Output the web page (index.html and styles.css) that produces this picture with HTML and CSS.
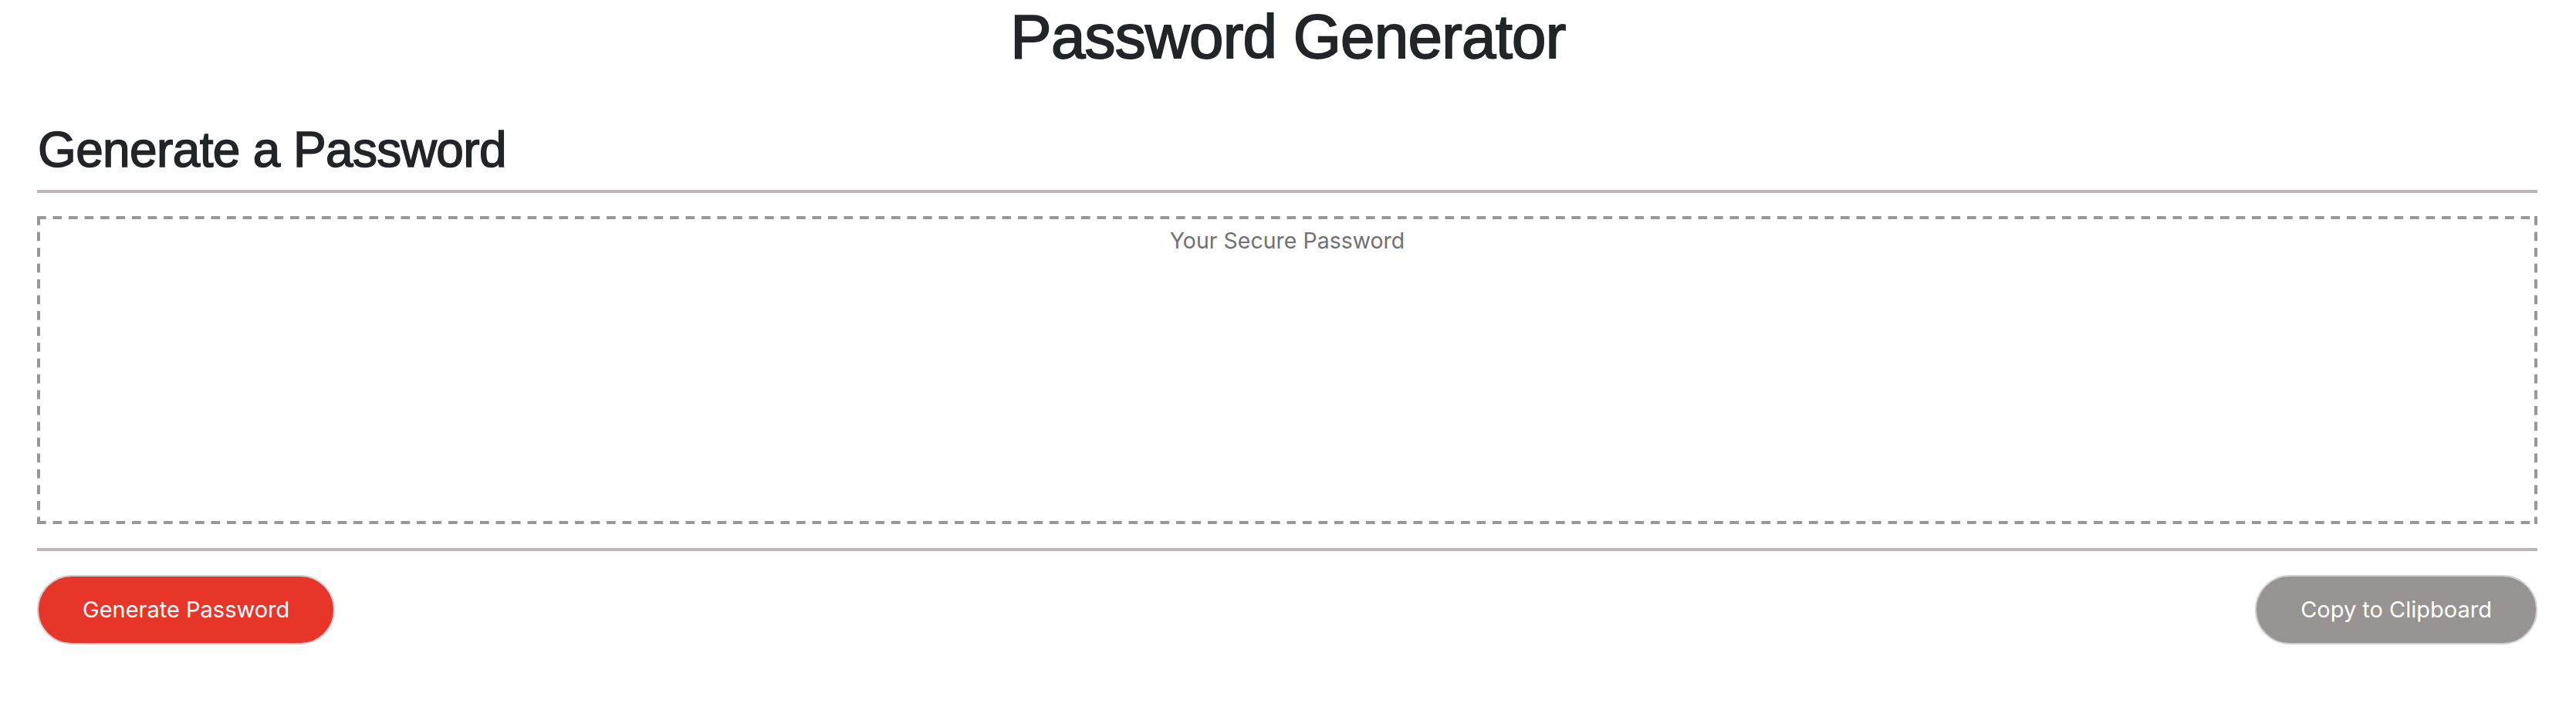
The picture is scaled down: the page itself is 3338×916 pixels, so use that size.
FILE: index.html
```html
<!DOCTYPE html>
<html lang="en">
<head>
<meta charset="utf-8">
<title>Password Generator</title>
<link rel="stylesheet" href="styles.css">
</head>
<body>
  <h1 class="title">Password Generator</h1>
  <main class="card">
    <h2 class="card-title">Generate a Password</h2>
    <hr class="rule rule-top">
    <textarea class="password" readonly placeholder="Your Secure Password"></textarea>
    <hr class="rule rule-bottom">
    <div class="actions">
      <button class="btn btn-generate" type="button">Generate Password</button>
      <button class="btn btn-copy" type="button">Copy to Clipboard</button>
    </div>
  </main>
</body>
</html>
```
FILE: styles.css
```css
html, body {
  margin: 0;
  padding: 0;
  background: #ffffff;
}

body {
  font-family: "Liberation Sans", Arial, sans-serif;
  color: #212529;
}

.title {
  margin: 0;
  font-size: 80px;
  line-height: 96px;
  font-weight: 400;
  letter-spacing: -0.01em;
  text-align: center;
  color: #222528;
  -webkit-text-stroke: 1.8px #222528;
}

.card {
  display: flex;
  flex-direction: column;
  padding: 60px 50px 0 48px;
}

.card-title {
  margin: 0;
  font-size: 64px;
  line-height: 77px;
  font-weight: 400;
  letter-spacing: -0.01em;
  color: #222528;
  padding-left: 1px;
  -webkit-text-stroke: 1.5px #222528;
}

.rule {
  border: 0;
  height: 4px;
  margin: 0;
  background: #bbb6b6;
}

.rule-top {
  margin-top: 13px;
}

.password {
  margin: 30px 0 0 0;
  height: 399px;
  box-sizing: border-box;
  border: none;
  padding: 11px 14px;
  resize: none;
  font-family: Inter, "Noto Sans", sans-serif;
  font-size: 28.5px;
  line-height: 42px;
  text-align: center;
  color: #333;
  outline: none;
  background:
    linear-gradient(90deg, #9b9797 12px, transparent 12px) left top / 20.5px 4px repeat-x,
    linear-gradient(90deg, #9b9797 12px, transparent 12px) left bottom / 20.5px 4px repeat-x,
    linear-gradient(180deg, #9b9797 12px, transparent 12px) left top / 4px 20.5px repeat-y,
    linear-gradient(180deg, #9b9797 12px, transparent 12px) right top / 4px 20.5px repeat-y,
    #ffffff;
}

.password::placeholder {
  color: #727272;
  opacity: 1;
}

.rule-bottom {
  margin-top: 31px;
}

.actions {
  display: flex;
  justify-content: space-between;
  margin-top: 31px;
}

.btn {
  box-sizing: border-box;
  height: 90px;
  padding: 0 57px;
  border: 2px solid #cfcfcf;
  border-radius: 45px;
  font-family: Inter, "Noto Sans", sans-serif;
  font-size: 29px;
  line-height: 42px;
  color: #ffffff;
  cursor: pointer;
}

.btn-generate {
  background: #e8352a;
}

.btn-copy {
  background: #979392;
}
```
